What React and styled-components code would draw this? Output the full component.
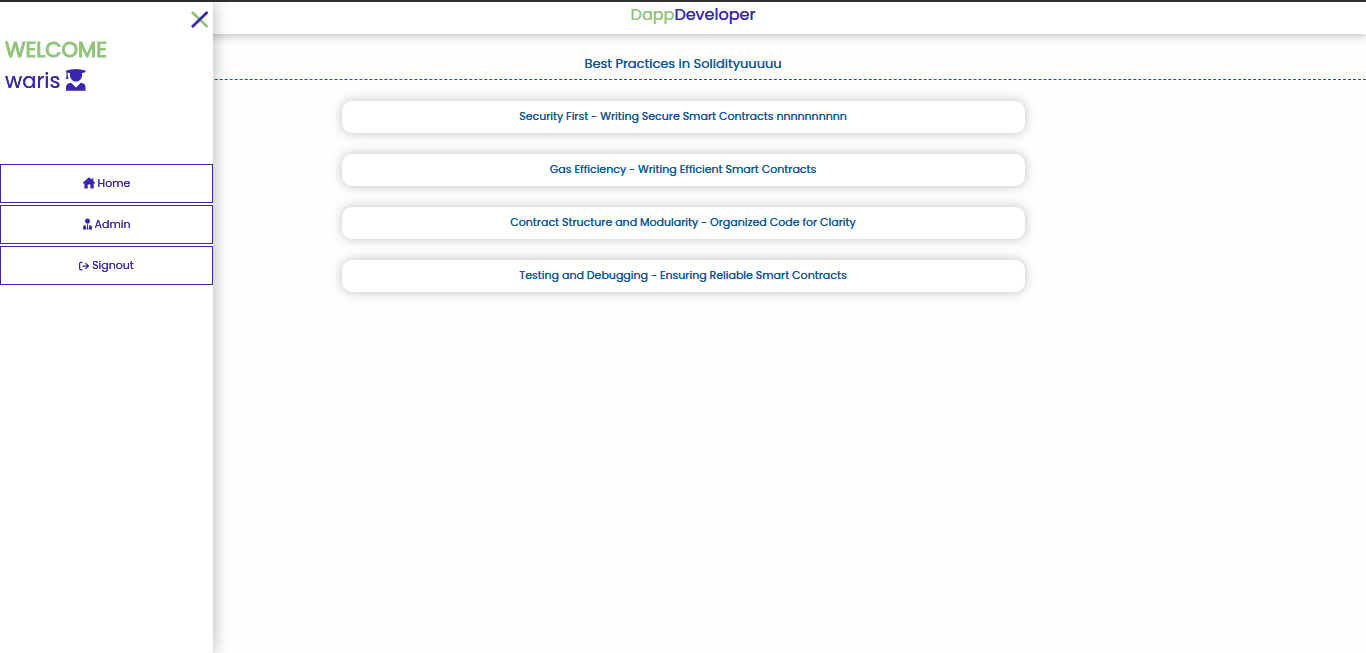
import React from 'react';
import styled, { createGlobalStyle } from 'styled-components';
import { FaArrowRightFromBracket } from 'react-icons/fa6';

const green = '#93c47d';
const indigo = '#3727b0';
const blue = '#0c589c';

const GlobalStyle = createGlobalStyle`
  *, *::before, *::after { box-sizing: border-box; }
  body {
    margin: 0;
    background: #fefefe;
    font-family: Poppins, Inter, "Liberation Sans", sans-serif;
    font-size: 11px;
    text-shadow: 0 0 0 currentColor;
  }
  h1, h2, p, ul { margin: 0; padding: 0; font-weight: 400; }
`;

const Page = styled.div`
  min-height: 100vh;
  border-top: 2px solid #36323a;
`;

const Header = styled.header`
  height: 32px;
  padding-left: 20px;
  background: #fff;
  box-shadow: 0 2px 10px rgba(0, 0, 0, 0.25);
  text-align: center;
`;

const Brand = styled.h1`
  color: ${indigo};
  font-size: 16px;
  line-height: 26px;
`;

const Accent = styled.span`
  color: ${green};
`;

const Sidebar = styled.aside`
  position: fixed;
  top: 2px;
  bottom: 0;
  left: 0;
  width: 213px;
  background: #fff;
  box-shadow: 0 0 16px rgba(0, 0, 0, 0.3);
`;

const CloseRow = styled.div`
  display: flex;
  justify-content: flex-end;
  height: 32px;
  padding: 8px 4px;
`;

const CloseButton = styled.button`
  width: 18px;
  height: 18px;
  padding: 0;
  border: 0;
  background: none;
  cursor: pointer;

  svg { display: block; }
`;

const Welcome = styled.div`
  height: 130px;
  padding-left: 5px;
  color: ${indigo};
  font-size: 21px;
  line-height: 31px;
`;

const Greeting = styled.p`
  color: ${green};
  -webkit-text-stroke: 1px ${green};
`;

const UserName = styled.p`
  display: flex;
  align-items: center;
  gap: 6px;
`;

const Menu = styled.nav`
  display: flex;
  flex-direction: column;
  gap: 2px;
`;

const MenuLink = styled.a`
  display: flex;
  align-items: center;
  justify-content: center;
  gap: 3px;
  height: 39px;
  border: 1px solid ${indigo};
  color: ${indigo};
  text-decoration: none;
`;

const Title = styled.h2`
  padding: 19px 0 5px;
  border-bottom: 1px dashed ${blue};
  color: ${blue};
  font-size: 13px;
  line-height: 21px;
  text-align: center;
`;

const Lessons = styled.ul`
  display: flex;
  flex-direction: column;
  gap: 21px;
  width: 50%;
  margin: 21px auto;
  list-style: none;
`;

const Lesson = styled.li`
  padding-bottom: 1px;
  border-radius: 10px;
  background: #fff;
  box-shadow: 0 0 12px rgba(0, 0, 0, 0.25);
  color: ${blue};
  line-height: 31px;
  text-align: center;
`;

const GraduateIcon = () => (
  <svg width="20" height="26" viewBox="0 0 20 26" fill="currentColor" aria-hidden="true">
    <path d="M0 2.6Q10-.8 19.5 2.6V4L16 5.2V7C16 11 13.2 13.6 10 13.6S4 11 4 7V5.2L1.6 4.4V7L2.6 11H0L.6 7Z" />
    <path d="M0 22.8V19C0 16.5 2.3 15 5 14.8L10 19.4 14.8 14.8C17.6 15 19.5 16.5 19.5 19V22.8Z" />
  </svg>
);

const HomeIcon = () => (
  <svg width="12" height="14" viewBox="0 0 12 14" fill="currentColor" aria-hidden="true">
    <path d="M6 .2 8.8 2.6V1.2H10.3V4L12 5.6V6.5H10.7V11.5H7.4V7.6H4.7V11.5H1.4V6.5H0V5.6Z" />
  </svg>
);

const AdminIcon = () => (
  <svg width="9" height="14" viewBox="0 0 9 14" fill="currentColor" aria-hidden="true">
    <path d="M4.5.6C6 .6 7 1.6 7 3S6 5.8 4.5 5.8 2 4.4 2 3 3 .6 4.5.6Z" />
    <path d="M3.7 6.3H5.3L4.9 7.5 5.4 11.5H3.6L4.1 7.5Z" />
    <path d="M2.7 7 3.1 11.5H0V9.5C0 8 1 7.2 2.7 7ZM6.3 7 5.9 11.5H9V9.5C9 8 8 7.2 6.3 7Z" />
  </svg>
);

const lessons = [
  'Security First - Writing Secure Smart Contracts nnnnnnnnnn',
  'Gas Efficiency - Writing Efficient Smart Contracts',
  'Contract Structure and Modularity - Organized Code for Clarity',
  'Testing and Debugging - Ensuring Reliable Smart Contracts',
];

export default function App() {
  return (
    <Page>
      <GlobalStyle />
      <Header>
        <Brand><Accent>Dapp</Accent>Developer</Brand>
      </Header>
      <main>
        <Title>Best Practices in Solidityuuuuu</Title>
        <Lessons>
          {lessons.map((lesson) => <Lesson key={lesson}>{lesson}</Lesson>)}
        </Lessons>
      </main>
      <Sidebar>
        <CloseRow>
          <CloseButton type="button" aria-label="Close menu">
            <svg width="18" height="18" viewBox="0 0 18 18" fill="none" strokeWidth="2.8">
              <path d="M1 2 16.5 17" stroke={green} />
              <path d="M16.5 2 1 17" stroke={indigo} />
            </svg>
          </CloseButton>
        </CloseRow>
        <Welcome>
          <Greeting>WELCOME</Greeting>
          <UserName>waris <GraduateIcon /></UserName>
        </Welcome>
        <Menu>
          <MenuLink href="#home"><HomeIcon />Home</MenuLink>
          <MenuLink href="#admin"><AdminIcon />Admin</MenuLink>
          <MenuLink href="#signout"><FaArrowRightFromBracket size={10} />Signout</MenuLink>
        </Menu>
      </Sidebar>
    </Page>
  );
}
